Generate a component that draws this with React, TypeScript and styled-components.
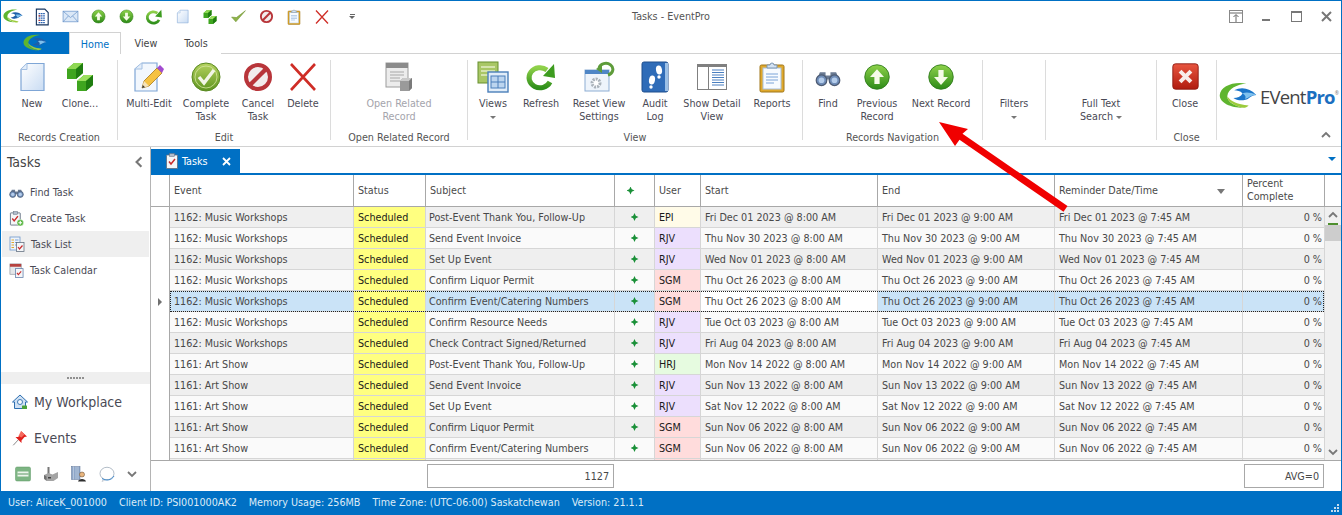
import { useId } from 'react'
import styled, { createGlobalStyle } from 'styled-components'

const BLUE = '#0070c4'
const FONT = '"DejaVu Sans Condensed", "DejaVu Sans", "Liberation Sans", sans-serif'
const TEXT_SIZE = '10.7px'

const GlobalStyle = createGlobalStyle`
  html, body { margin: 0; padding: 0; background: #fff; }
  * { box-sizing: border-box; }
  body { font-family: ${FONT}; font-stretch: condensed; font-size: ${TEXT_SIZE}; color: #444; }
`

interface IconProps {
  readonly size?: number
}

const Svg = ({ size = 32, children }: IconProps & { children: React.ReactNode }) => (
  <svg width={size} height={size} viewBox="0 0 32 32" style={{ display: 'block', flex: 'none' }}>{children}</svg>
)

const PageIcon = ({ size }: IconProps) => {
  const id = useId()
  return (
    <Svg size={size}>
      <defs><linearGradient id={id} x1="0" y1="0" x2="1" y2="1"><stop offset="0" stopColor="#ffffff" /><stop offset="1" stopColor="#c9dcf3" /></linearGradient></defs>
      <path d="M11 2.500h17v27H5V8.500z" fill={`url(#${id})`} stroke="#7fa6d6" strokeWidth="1.2" />
      <path d="M11 2.500v6H5" fill="#e3edf9" stroke="#a4c0e2" strokeWidth="1" />
    </Svg>
  )
}

const CubesIcon = ({ size }: IconProps) => (
  <Svg size={size}>
    <path d="M3 8l7-6h9v10l-7 6H3z" fill="#3fa51f" />
    <path d="M3 8l7-6h9l-7 6z" fill="#8fd853" />
    <path d="M12 8l7-6v10l-7 6z" fill="#1f7d10" />
    <path d="M13 20l7-6h9v10l-7 6h-9z" fill="#3fa51f" />
    <path d="M13 20l7-6h9l-7 6z" fill="#9be05e" />
    <path d="M22 20l7-6v10l-7 6z" fill="#1f7d10" />
  </Svg>
)

const PencilPageIcon = ({ size }: IconProps) => (
  <Svg size={size}>
    <path d="M9 2h15v28H2V8z" fill="#f2f7fd" stroke="#7fa6d6" strokeWidth="1.2" />
    <path d="M9 2v6H2" fill="#e3edf9" stroke="#a4c0e2" />
    <path d="M9 27l2-7L24 7l5 5-13 13z" fill="#f5c242" stroke="#a87a1c" strokeWidth=".8" />
    <path d="M24 7l3-3 4 4-2 4z" fill="#a24bd0" />
    <path d="M9 27l2-7 5 5z" fill="#f6e3b8" />
    <path d="M9 27l.8-3 2.2 2.2z" fill="#333" />
  </Svg>
)

const CheckCircleIcon = ({ size }: IconProps) => {
  const id = useId()
  return (
    <Svg size={size}>
      <defs><linearGradient id={id} x1="0" y1="0" x2="0" y2="1"><stop offset="0" stopColor="#b5d25f" /><stop offset="1" stopColor="#5e9420" /></linearGradient></defs>
      <circle cx="16" cy="16" r="14" fill={`url(#${id})`} stroke="#5a8a22" />
      <circle cx="16" cy="16" r="11" fill="none" stroke="#d5e6a0" strokeWidth=".8" />
      <path d="M9 16l5 6L24 9" fill="none" stroke="#f2f5e8" strokeWidth="3.4" />
    </Svg>
  )
}

const CancelIcon = ({ size }: IconProps) => (
  <Svg size={size}>
    <circle cx="16" cy="16" r="12" fill="#f2ecec" stroke="#b8353a" strokeWidth="4" />
    <path d="M7 25L25 7" stroke="#b8353a" strokeWidth="4.4" />
  </Svg>
)

const CrossIcon = ({ size }: IconProps) => (
  <Svg size={size}>
    <path d="M4 3l24 26M28 3L4 29" stroke="#cf2d26" strokeWidth="2.6" fill="none" />
  </Svg>
)

const RelatedIcon = ({ size }: IconProps) => (
  <Svg size={size}>
    <rect x="3" y="2" width="22" height="24" fill="#ececec" stroke="#9c9c9c" />
    <rect x="3" y="2" width="22" height="5" fill="#8b8b8b" />
    <path d="M7 11h14M7 14h14M7 17h10M7 20h10" stroke="#a8a8a8" />
    <path d="M17 20l3-3h9v10l-3 3h-9z" fill="#9a9a9a" />
    <path d="M17 20l3-3h9l-3 3z" fill="#c9c9c9" />
    <path d="M26 20l3-3v10l-3 3z" fill="#7a7a7a" />
  </Svg>
)

const ViewsIcon = ({ size }: IconProps) => (
  <Svg size={size}>
    <rect x="1" y="1" width="20" height="21" fill="#a9c766" stroke="#678f2e" />
    <path d="M4 6h14M4 10h14M4 14h8" stroke="#e3eec6" strokeWidth="1.6" />
    <rect x="11" y="11" width="20" height="20" fill="#e1edf9" stroke="#4a7fba" strokeWidth="1.4" />
    <rect x="14" y="15" width="14" height="12" fill="#bcd5ef" stroke="#4a7fba" />
    <path d="M21 15v12M14 21h14" stroke="#4a7fba" />
  </Svg>
)

const RefreshIcon = ({ size }: IconProps) => {
  const id = useId()
  return (
    <Svg size={size}>
      <defs><linearGradient id={id} x1="0" y1="0" x2="0" y2="1"><stop offset="0" stopColor="#8fd14a" /><stop offset="1" stopColor="#2f8f1a" /></linearGradient></defs>
      <path d="M25 21a11 10 0 1 1-3-12" fill="none" stroke={`url(#${id})`} strokeWidth="5" />
      <path d="M18 15L29 3l1 14z" fill="#3d9c1f" />
    </Svg>
  )
}

const ResetIcon = ({ size }: IconProps) => (
  <Svg size={size}>
    <rect x="2" y="9" width="24" height="21" fill="#eef4fb" stroke="#8eaed3" />
    <rect x="2" y="9" width="24" height="4" fill="#4f86c6" />
    <circle cx="13" cy="22" r="4" fill="#fff" stroke="#aab2ba" strokeWidth="3" strokeDasharray="2 1" />
    <path d="M16 7a7 6 0 1 1 9 7" fill="none" stroke="#5e9c3a" strokeWidth="3" />
    <path d="M13 8l6-4v8z" fill="#5e9c3a" />
  </Svg>
)

const AuditIcon = ({ size }: IconProps) => (
  <Svg size={size}>
    <rect x="3" y="1" width="26" height="30" rx="2" fill="#2f6cb8" stroke="#1f4f8e" />
    <rect x="26" y="2" width="3" height="28" fill="#9cc0e6" />
    <ellipse cx="13" cy="19" rx="3" ry="4.5" fill="#fff" transform="rotate(10 13 19)" />
    <circle cx="12" cy="26" r="1.7" fill="#fff" />
    <ellipse cx="20" cy="9" rx="3" ry="4.5" fill="#fff" transform="rotate(-10 20 9)" />
    <circle cx="20" cy="16" r="1.7" fill="#fff" />
  </Svg>
)

const DetailIcon = ({ size }: IconProps) => (
  <Svg size={size}>
    <rect x="1.5" y="3.5" width="29" height="25" fill="#fff" stroke="#808080" />
    <rect x="1" y="3" width="30" height="3" fill="#808080" />
    <path d="M12.5 6v22" stroke="#808080" />
    <path d="M16 9h12M16 11.5h12M16 14h12M16 16.500h12M16 19h12M16 21.500h12M16 24h12" stroke="#4a7fc0" />
  </Svg>
)

const ClipboardIcon = ({ size }: IconProps) => (
  <Svg size={size}>
    <rect x="4" y="4" width="24" height="27" rx="1.500" fill="#e0a92c" stroke="#a0761a" />
    <rect x="7" y="7" width="18" height="21" fill="#f7fbff" stroke="#a9c1dc" />
    <path d="M10 13h12M10 16h12M10 19h12M10 22h8" stroke="#7ba4d8" />
    <path d="M11 7V4h3a2 2 0 0 1 4 0h3v3z" fill="#d4e3f4" stroke="#7b95b3" />
  </Svg>
)

const BinocularsIcon = ({ size }: IconProps) => (
  <Svg size={size}>
    <path d="M6 10h7v4h6v-4h7l5 12H18v-3h-4v3H1z" fill="#6a7a92" />
    <circle cx="8" cy="20" r="6.500" fill="#6f8db8" stroke="#4e5c74" strokeWidth="1.500" />
    <circle cx="24" cy="20" r="6.500" fill="#6f8db8" stroke="#4e5c74" strokeWidth="1.500" />
    <circle cx="8" cy="20" r="3.500" fill="#b5cdeb" />
    <circle cx="24" cy="20" r="3.500" fill="#b5cdeb" />
  </Svg>
)

const ArrowCircleIcon = ({ size, down }: IconProps & { down?: boolean }) => {
  const id = useId()
  return (
    <Svg size={size}>
      <defs><linearGradient id={id} x1="0" y1="0" x2="0" y2="1"><stop offset="0" stopColor="#8ed24a" /><stop offset="1" stopColor="#2c8a17" /></linearGradient></defs>
      <circle cx="16" cy="16" r="14" fill={`url(#${id})`} stroke="#2f7a1c" />
      <path d={down ? 'M16 25l-8-9h5V8h6v8h5z' : 'M16 7l8 9h-5v8h-6v-8H8z'} fill="#f5fbe8" />
    </Svg>
  )
}

const CloseBoxIcon = ({ size }: IconProps) => {
  const id = useId()
  return (
    <Svg size={size}>
      <defs><linearGradient id={id} x1="0" y1="0" x2="0" y2="1"><stop offset="0" stopColor="#e8553f" /><stop offset="1" stopColor="#b01c10" /></linearGradient></defs>
      <rect x="2" y="2" width="28" height="28" rx="3" fill={`url(#${id})`} stroke="#8c1b12" />
      <path d="M10 10l12 12M22 10L10 22" stroke="#f8ecea" strokeWidth="4.400" />
    </Svg>
  )
}

const DocLinesIcon = ({ size }: IconProps) => (
  <Svg size={size}>
    <path d="M6 2h15l6 6v22H6z" fill="#fff" stroke="#17355f" strokeWidth="2" />
    <path d="M10 10h12M10 14h12M10 18h12M10 22h12M10 26h12" stroke="#2b62b0" strokeWidth="1.800" strokeDasharray="3 1" />
    <path d="M10 14h3M10 22h3" stroke="#c2352d" strokeWidth="1.800" />
  </Svg>
)

const MailIcon = ({ size }: IconProps) => (
  <Svg size={size}>
    <rect x="2" y="6" width="28" height="20" fill="#dbe8f7" stroke="#6d97cb" strokeWidth="1.400" />
    <path d="M2 6l14 12L30 6M2 26l10-11M30 26L20 15" fill="none" stroke="#6d97cb" strokeWidth="1.400" />
  </Svg>
)

const CheckMarkIcon = ({ size }: IconProps) => (
  <Svg size={size}>
    <path d="M3 17l8 9L29 5 12 18z" fill="#8eb34a" stroke="#6b8f2c" />
  </Svg>
)

const SwooshLogo = ({ width, dark }: { width: number; dark?: boolean }) => (
  <svg width={width} height={width * 0.72} viewBox="0 0 50 36" style={{ display: 'block', flex: 'none' }}>
    <path d="M36 2C18-1 2 6 1 17c-.8 10 14 17 31 17-12-3-22-8-21-16C12 9 24 3 36 2z" fill="#5fb52e" />
    <path d="M32 34c-12-3-21-8-21-15 5 7 13 10 28 12-2 2-4 3-7 3z" fill="#9ccb3b" />
    <path d="M20 11c9-5 21-3 29 6-8 0-8 6-17 7-6 .5-10-1-13-3 5 0 10-2 12-6-3-3-7-4-11-4z" fill={dark ? '#1e5fa8' : '#1b75c9'} />
    <path d="M31 15c5-2 11-1 18 2-8 0-9 4-15 5 2-2 1-5-3-7z" fill="#7fc1ee" />
  </svg>
)

const TaskClipIcon = ({ size }: IconProps) => (
  <Svg size={size}>
    <rect x="5" y="4" width="22" height="27" rx="1" fill="#f4f6f8" stroke="#5d6b7c" strokeWidth="1.600" />
    <rect x="11" y="1" width="10" height="6" fill="#b0bccb" stroke="#5d6b7c" />
    <path d="M10 17l4 5 8-10" fill="none" stroke="#c92a2a" strokeWidth="3" />
  </Svg>
)

const TaskCreateIcon = ({ size }: IconProps) => (
  <Svg size={size}>
    <rect x="3" y="4" width="21" height="26" rx="1" fill="#f4f6f8" stroke="#5d6b7c" strokeWidth="1.800" />
    <rect x="9" y="1" width="9" height="6" fill="#b0bccb" stroke="#5d6b7c" />
    <path d="M7 16l4 5 8-10" fill="none" stroke="#c92a2a" strokeWidth="3" />
    <circle cx="24" cy="25" r="7" fill="#52b33a" stroke="#fff" />
    <path d="M24 21v8M20 25h8" stroke="#fff" strokeWidth="2.400" />
  </Svg>
)

const TaskListIcon = ({ size }: IconProps) => (
  <Svg size={size}>
    <rect x="2" y="2" width="20" height="26" fill="#eef4fb" stroke="#6d97cb" strokeWidth="1.600" />
    <path d="M5 8h5M5 13h5M5 18h5M5 23h5" stroke="#e0a92c" strokeWidth="2" />
    <path d="M12 8h7M12 13h7M12 18h7" stroke="#7ba4d8" strokeWidth="2" />
    <rect x="15" y="13" width="15" height="18" fill="#f4f6f8" stroke="#5d6b7c" strokeWidth="1.500" />
    <path d="M18 22l3 4 6-7" fill="none" stroke="#c92a2a" strokeWidth="2.400" />
  </Svg>
)

const TaskCalendarIcon = ({ size }: IconProps) => (
  <Svg size={size}>
    <rect x="2" y="2" width="24" height="22" fill="#e4e7ea" stroke="#8a929c" strokeWidth="1.400" />
    <rect x="2" y="2" width="24" height="6" fill="#b6423f" />
    <rect x="14" y="12" width="16" height="19" fill="#f4f6f8" stroke="#5d7ba8" strokeWidth="1.600" />
    <path d="M17 21l3 4 6-7" fill="none" stroke="#c92a2a" strokeWidth="2.400" />
  </Svg>
)

const HomeIcon = ({ size }: IconProps) => (
  <Svg size={size}>
    <path d="M16 2L1 16h4v13h22V16h4z" fill="#cfe0f3" stroke="#2e6fb0" strokeWidth="2" />
    <circle cx="16" cy="16" r="5" fill="#f6f9fd" stroke="#2e6fb0" strokeWidth="1.800" />
    <rect x="20" y="23" width="10" height="7" rx="1" fill="#4ba33a" />
  </Svg>
)

const PinIcon = ({ size }: IconProps) => (
  <Svg size={size}>
    <path d="M2 31l10-11" stroke="#b9b9b9" strokeWidth="2" />
    <path d="M3 30l11-12" stroke="#777" strokeWidth="1" />
    <path d="M18 2l12 11-5 1-6 7 0 5-12-12 5 0 7-6z" fill="#e0201c" />
    <path d="M18 2l7 7-6 6-6-3z" fill="#f56a5e" />
  </Svg>
)

const RoomIcon = ({ size }: IconProps) => (
  <Svg size={size}>
    <rect x="1" y="2" width="30" height="28" rx="3" fill="#7db583" stroke="#5b9663" />
    <rect x="5" y="11" width="22" height="10" fill="#eef5ec" />
    <path d="M5 16h22" stroke="#5b9663" strokeWidth="2" />
  </Svg>
)

const FactoryIcon = ({ size }: IconProps) => (
  <Svg size={size}>
    <rect x="9" y="2" width="4" height="14" fill="#777" />
    <path d="M2 18l9-4 8 3 11-5v12l-9 6H7l-5-4z" fill="#a4a4a4" />
    <path d="M2 18l5 3 0 8-5-4z" fill="#6f6f6f" />
    <rect x="10" y="22" width="6" height="3" fill="#444" />
  </Svg>
)

const PersonIcon = ({ size }: IconProps) => (
  <Svg size={size}>
    <rect x="1" y="1" width="17" height="26" fill="#8ea6c8" stroke="#5a7194" />
    <path d="M5 1v26M10 1v26M14 1v26" stroke="#dbe4f0" />
    <circle cx="22" cy="17" r="5" fill="#e8b57e" stroke="#5a3f25" />
    <path d="M14 31c1-7 15-7 16 0z" fill="#2e2e2e" />
  </Svg>
)

const BubbleIcon = ({ size }: IconProps) => (
  <Svg size={size}>
    <ellipse cx="16" cy="15" rx="14" ry="12.500" fill="#fff" stroke="#9aa7b5" strokeWidth="1.500" />
    <path d="M9 26l-3 5 8-4" fill="#fff" stroke="#9aa7b5" />
    <path d="M6 25c8 5 19 4 24-5" fill="none" stroke="#2e7fc9" strokeWidth="1.800" />
  </Svg>
)

const Chevron = ({ dir, size = 10, color = '#777' }: { dir: 'up' | 'down' | 'left'; size?: number; color?: string }) => {
  const d = { up: 'M1 7l4-4 4 4', down: 'M1 3l4 4 4-4', left: 'M7 1L3 5l4 4' }[dir]
  return (
    <svg width={size} height={size} viewBox="0 0 10 10" style={{ display: 'block', flex: 'none' }}>
      <path d={d} fill="none" stroke={color} strokeWidth="1.800" />
    </svg>
  )
}

const Window = styled.div`
  position: relative;
  width: 1342px;
  height: 515px;
  overflow: hidden;
  display: flex;
  flex-direction: column;
  border: 1px solid ${BLUE};
  border-bottom: 0;
`

const TitleBar = styled.div`
  height: 31px;
  flex: none;
  position: relative;
  display: flex;
  align-items: center;
`

const Qat = styled.div`
  display: flex;
  align-items: center;
`

const QatSlot = styled.div<{ $w?: number; $pr?: number }>`
  width: ${p => p.$w ?? 28}px;
  padding-right: ${p => p.$pr ?? 0}px;
  display: flex;
  justify-content: center;
`

const QatMore = styled.div`
  margin-left: 1px;
  width: 30px;
  display: flex;
  flex-direction: column;
  align-items: center;
  gap: 1px;
  &::before { content: ''; width: 5px; height: 1px; background: #666; }
  &::after { content: ''; border: 3px solid transparent; border-top: 3px solid #666; border-bottom: 0; }
`

const WindowTitle = styled.div`
  position: absolute;
  left: 0;
  right: 0;
  top: 9px;
  text-align: center;
  color: #555;
`

const WindowButtons = styled.div`
  margin-left: auto;
  display: flex;
  align-items: center;
`

const WindowButton = styled.div`
  width: 30px;
  height: 20px;
  display: flex;
  align-items: center;
  justify-content: center;
`

const TabRow = styled.div`
  height: 22px;
  flex: none;
  display: flex;
  border-bottom: 1px solid #d2d2d2;
`

const AppButton = styled.div`
  width: 68px;
  height: 22px;
  background: ${BLUE};
  display: flex;
  align-items: center;
  justify-content: center;
`

const RibbonTab = styled.div<{ $active?: boolean }>`
  height: 22px;
  padding-top: 5px;
  width: ${p => (p.$active ? 52 : 50)}px;
  text-align: center;
  color: ${p => (p.$active ? BLUE : '#444')};
  background: #fff;
  ${p => p.$active && 'border: 1px solid #d2d2d2; border-bottom: 0;'}
`

const Ribbon = styled.div`
  height: 93px;
  flex: none;
  display: flex;
  padding: 6px 0;
  border-bottom: 1px solid #d2d2d2;
`

const RibbonGroup = styled.div<{ $w: number }>`
  width: ${p => p.$w}px;
  flex: none;
  display: flex;
  flex-direction: column;
  border-right: 1px solid #dcdcdc;
`

const GroupButtons = styled.div<{ $pad?: number }>`
  flex: 1;
  display: flex;
  padding-left: ${p => p.$pad ?? 0}px;
`

const GroupLabel = styled.div`
  height: 14px;
  line-height: 14px;
  margin-bottom: -5px;
  text-align: center;
  color: #555;
  white-space: nowrap;
`

const RibbonButton = styled.div<{ $w: number; $off?: boolean }>`
  width: ${p => p.$w}px;
  flex: none;
  display: flex;
  flex-direction: column;
  align-items: center;
  text-align: center;
  color: ${p => (p.$off ? '#a4a4ac' : '#4a4a55')};
  line-height: 13px;
`

const IconHolder = styled.div`
  height: 33px;
  flex: none;
  margin-bottom: 4px;
  display: flex;
  align-items: center;
  justify-content: center;
`

const ButtonLabel = styled.span`
  display: block;
`

const Caret = styled.span`
  display: inline-block;
  width: 0;
  height: 0;
  border: 3px solid transparent;
  border-top: 3px solid #777;
  border-bottom: 0;
  vertical-align: middle;
`

const SearchCaret = styled(Caret)`
  margin-left: 3px;
`

const TextOnlyButton = styled(RibbonButton)`
  padding-top: 37px;
`

const LogoBox = styled.div`
  flex: 1;
  position: relative;
  display: flex;
  align-items: center;
  gap: 3px;
  padding: 0 0 8px 2px;
`

const LogoText = styled.div`
  font-family: "Open Sans", "Liberation Sans", sans-serif;
  font-stretch: normal;
  font-size: 18.500px;
  letter-spacing: -.8px;
  color: #444;
  white-space: nowrap;
  b { color: #1b6fc0; font-weight: 700; }
  sup { font-size: 5px; letter-spacing: 0; vertical-align: 9px; color: #777; line-height: 0; }
`

const RibbonCollapse = styled.div`
  position: absolute;
  right: 10px;
  bottom: 0;
`

const Body = styled.div`
  flex: 1;
  min-height: 0;
  display: flex;
`

const Sidebar = styled.aside`
  width: 150px;
  flex: none;
  display: flex;
  flex-direction: column;
  border-right: 1px solid #b4b4b4;
`

const SideHead = styled.div`
  height: 32px;
  flex: none;
  display: flex;
  align-items: center;
  justify-content: space-between;
  padding: 0 5px 2px 6px;
  font-size: 14px;
  color: #444;
`

const SideItem = styled.div<{ $active?: boolean }>`
  height: 26px;
  flex: none;
  margin: 0 1px;
  padding-left: 7px;
  display: flex;
  align-items: center;
  gap: 6px;
  color: #4a4a55;
  background: ${p => (p.$active ? '#efefef' : 'transparent')};
`

const SideSpacer = styled.div`
  flex: 1;
`

const Splitter = styled.div`
  height: 12px;
  flex: none;
  background: #efefef;
  display: flex;
  align-items: center;
  justify-content: center;
  gap: 1px;
  i { width: 2px; height: 2px; background: #909090; }
`

const BigItem = styled.div`
  height: 36px;
  flex: none;
  padding-left: 11px;
  display: flex;
  align-items: center;
  gap: 6px;
  font-size: 14px;
  color: #4a4a55;
`

const SideFooter = styled.div`
  height: 35px;
  flex: none;
  padding-left: 14px;
  display: flex;
  align-items: center;
  gap: 12px;
`

const Main = styled.main`
  flex: 1;
  min-width: 0;
  display: flex;
  flex-direction: column;
`

const DocStrip = styled.div`
  height: 28px;
  flex: none;
  padding-top: 2px;
  display: flex;
  justify-content: space-between;
  border-bottom: 2px solid ${BLUE};
`

const DocTab = styled.div`
  width: 89px;
  height: 24px;
  background: ${BLUE};
  color: #fff;
  display: flex;
  align-items: center;
  padding-left: 13px;
  gap: 2px;
`

const DocTabClose = styled.svg`
  margin-left: 12px;
`

const DocMenu = styled.div`
  margin: 8px 5px 0 0;
  width: 0;
  height: 0;
  border: 4px solid transparent;
  border-top: 4px solid ${BLUE};
  border-bottom: 0;
`

const COLUMNS = '19px 184px 72px 189px 40px 46px 177px 177px 188px 82px'

const HeaderRow = styled.div`
  height: 32px;
  flex: none;
  display: grid;
  grid-template-columns: ${COLUMNS} 16px;
  border-bottom: 1px solid #a8a8a8;
`

const HeaderCell = styled.div<{ $center?: boolean }>`
  display: flex;
  align-items: center;
  justify-content: ${p => (p.$center ? 'center' : 'flex-start')};
  position: relative;
  padding: 0 3px 1px 4px;
  border-right: 1px solid #a8a8a8;
  color: #4a4a4a;
  line-height: 13px;
`

const SortMark = styled.span`
  position: absolute;
  right: 17px;
  top: 14px;
  width: 0;
  height: 0;
  border: 4.500px solid transparent;
  border-top: 5px solid #777;
  border-bottom: 0;
`

const GridBody = styled.div`
  flex: 1;
  min-height: 0;
  display: flex;
`

const Rows = styled.div`
  width: 1174px;
  flex: none;
  overflow: hidden;
`

const Row = styled.div<{ $selected?: boolean }>`
  position: relative;
  height: 21px;
  display: grid;
  grid-template-columns: ${COLUMNS};
  ${p => p.$selected && `
    &::after {
      content: '';
      position: absolute;
      inset: 0 1px 0 19px;
      border: 1px dotted #222;
    }
  `}
`

const Indicator = styled.div`
  display: flex;
  align-items: center;
  justify-content: center;
  border-right: 1px solid #a8a8a8;
`

const IndicatorMark = styled.span`
  width: 0;
  height: 0;
  border: 4px solid transparent;
  border-left: 4px solid #707070;
  border-right: 0;
`

const Cell = styled.div<{ $bg: string; $dark?: boolean }>`
  background: ${p => p.$bg};
  border-right: 1px solid #d6d6d6;
  border-bottom: 1px solid #d6d6d6;
  color: ${p => (p.$dark ? '#1a1a1a' : '#484848')};
  padding: 0 4px;
  display: flex;
  align-items: center;
  white-space: nowrap;
  overflow: hidden;
`

const SubjectCell = styled(Cell)`
  padding-left: 3px;
`

const MarkCell = styled(Cell)`
  justify-content: center;
`

const PercentCell = styled(Cell)`
  justify-content: flex-end;
  padding-right: 2px;
`

const Sparkle = styled.span`
  width: 8px;
  height: 8px;
  background: #1a9038;
  clip-path: polygon(50% 0, 66% 34%, 100% 50%, 66% 66%, 50% 100%, 34% 66%, 0 50%, 34% 34%);
`

const HeaderSparkle = styled(Sparkle)`
  margin: 1px 9px 0 0;
`

const Scrollbar = styled.div`
  width: 16px;
  flex: none;
  background: #f0f0f0;
  display: flex;
  flex-direction: column;
  align-items: center;
  padding: 3px 0 3px;
`

const ScrollMarker = styled.div`
  width: 10px;
  height: 2px;
  margin-top: 3px;
  background: #4e8f2e;
`

const ScrollThumb = styled.div`
  width: 16px;
  height: 16px;
  background: #cdcdcd;
`

const ScrollGap = styled.div`
  flex: 1;
`

const Footer = styled.div`
  height: 31px;
  flex: none;
  border-top: 1px solid #a8a8a8;
  display: grid;
  grid-template-columns: 276px 187px 630px 80px;
  padding-top: 3px;
`

const TotalBox = styled.div`
  height: 24px;
  border: 1px solid #a8a8a8;
  display: flex;
  align-items: center;
  justify-content: flex-end;
  padding-right: 4px;
  color: #484848;
`

const StatusBar = styled.footer`
  position: relative;
  height: 24px;
  flex: none;
  margin: 0 -1px;
  background: ${BLUE};
  color: #dcebf7;
  display: flex;
  align-items: center;
  gap: 12px;
  padding: 0 8px 1px;
`

const Grip = styled.svg`
  position: absolute;
  right: 2px;
  bottom: 2px;
`

const ArrowOverlay = styled.svg`
  position: absolute;
  left: -1px;
  top: -1px;
  pointer-events: none;
`

interface Task {
  readonly event: string
  readonly subject: string
  readonly user: string
  readonly start: string
  readonly end: string
  readonly reminder: string
}

const task = (event: string, subject: string, user: string, date: string): Task => ({
  event,
  subject,
  user,
  start: `${date} @ 8:00 AM`,
  end: `${date} @ 9:00 AM`,
  reminder: `${date} @ 7:45 AM`,
})

const MUSIC = '1162: Music Workshops'
const ART = '1161: Art Show'

const TASKS: readonly Task[] = [
  task(MUSIC, 'Post-Event Thank You, Follow-Up', 'EPI', 'Fri Dec 01 2023'),
  task(MUSIC, 'Send Event Invoice', 'RJV', 'Thu Nov 30 2023'),
  task(MUSIC, 'Set Up Event', 'RJV', 'Wed Nov 01 2023'),
  task(MUSIC, 'Confirm Liquor Permit', 'SGM', 'Thu Oct 26 2023'),
  task(MUSIC, 'Confirm Event/Catering Numbers', 'SGM', 'Thu Oct 26 2023'),
  task(MUSIC, 'Confirm Resource Needs', 'RJV', 'Tue Oct 03 2023'),
  task(MUSIC, 'Check Contract Signed/Returned', 'RJV', 'Fri Aug 04 2023'),
  task(ART, 'Post-Event Thank You, Follow-Up', 'HRJ', 'Mon Nov 14 2022'),
  task(ART, 'Send Event Invoice', 'RJV', 'Sun Nov 13 2022'),
  task(ART, 'Set Up Event', 'RJV', 'Sat Nov 12 2022'),
  task(ART, 'Confirm Liquor Permit', 'SGM', 'Sun Nov 06 2022'),
  task(ART, 'Confirm Event/Catering Numbers', 'SGM', 'Sun Nov 06 2022'),
]

const USER_COLORS: Record<string, string> = {
  EPI: '#fffbe8',
  RJV: '#ecdffd',
  SGM: '#ffdcdc',
  HRJ: '#e6fbe0',
}

const SELECTED_INDEX = 4

const TaskRow = ({ row, index }: { row: Task; index: number }) => {
  const selected = index === SELECTED_INDEX
  const bg = selected ? '#cae3f7' : index % 2 === 0 ? '#efefef' : '#fafafa'
  return (
    <Row $selected={selected}>
      <Indicator>{selected && <IndicatorMark />}</Indicator>
      <Cell $bg={bg}>{row.event}</Cell>
      <Cell $bg="#ffff80" $dark>Scheduled</Cell>
      <SubjectCell $bg={bg}>{row.subject}</SubjectCell>
      <MarkCell $bg={bg}><Sparkle /></MarkCell>
      <Cell $bg={USER_COLORS[row.user]} $dark>{row.user}</Cell>
      <Cell $bg={selected ? '#fff' : bg}>{row.start}</Cell>
      <Cell $bg={bg}>{row.end}</Cell>
      <Cell $bg={bg}>{row.reminder}</Cell>
      <PercentCell $bg={bg}>0 %</PercentCell>
    </Row>
  )
}

const ClippedRow = () => (
  <Row>
    <Indicator />
    <Cell $bg="#efefef" />
    <Cell $bg="#ffff80" />
    <Cell $bg="#efefef" />
    <Cell $bg="#efefef" />
    <Cell $bg={USER_COLORS.SGM} />
    <Cell $bg="#efefef" />
    <Cell $bg="#efefef" />
    <Cell $bg="#efefef" />
    <Cell $bg="#efefef" />
  </Row>
)

const Button = ({ w, icon, off, children }: { w: number; icon: React.ReactNode; off?: boolean; children: React.ReactNode }) => (
  <RibbonButton $w={w} $off={off}>
    <IconHolder>{icon}</IconHolder>
    <ButtonLabel>{children}</ButtonLabel>
  </RibbonButton>
)

export default function App() {
  return (
    <>
      <GlobalStyle />
      <Window>
        <TitleBar>
          <Qat>
            <QatSlot $w={27} $pr={3}><SwooshLogo width={20} dark /></QatSlot>
            <QatSlot><DocLinesIcon size={18} /></QatSlot>
            <QatSlot><MailIcon size={17} /></QatSlot>
            <QatSlot><ArrowCircleIcon size={15} /></QatSlot>
            <QatSlot><ArrowCircleIcon size={15} down /></QatSlot>
            <QatSlot><RefreshIcon size={18} /></QatSlot>
            <QatSlot><PageIcon size={15} /></QatSlot>
            <QatSlot><CubesIcon size={16} /></QatSlot>
            <QatSlot><CheckMarkIcon size={17} /></QatSlot>
            <QatSlot><CancelIcon size={15} /></QatSlot>
            <QatSlot><ClipboardIcon size={16} /></QatSlot>
            <QatSlot><CrossIcon size={16} /></QatSlot>
            <QatMore />
          </Qat>
          <WindowTitle>Tasks - EventPro</WindowTitle>
          <WindowButtons>
            <WindowButton>
              <svg width="14" height="13" viewBox="0 0 14 13"><rect x=".5" y=".5" width="13" height="12" fill="none" stroke="#888" /><path d="M1 3h12M7 12V5M4.500 7L7 4.500 9.500 7" fill="none" stroke="#666" /></svg>
            </WindowButton>
            <WindowButton>
              <svg width="10" height="10" viewBox="0 0 10 10"><rect x="1" y="7" width="8" height="2" fill="#777" /></svg>
            </WindowButton>
            <WindowButton>
              <svg width="11" height="11" viewBox="0 0 11 11"><rect x=".5" y=".5" width="10" height="10" fill="none" stroke="#777" /><rect x="0" y="0" width="11" height="2" fill="#777" /></svg>
            </WindowButton>
            <WindowButton>
              <svg width="11" height="11" viewBox="0 0 11 11"><path d="M1 1l9 9M10 1l-9 9" stroke="#777" strokeWidth="2" /></svg>
            </WindowButton>
          </WindowButtons>
        </TitleBar>
        <TabRow>
          <AppButton><SwooshLogo width={24} dark /></AppButton>
          <RibbonTab $active>Home</RibbonTab>
          <RibbonTab>View</RibbonTab>
          <RibbonTab>Tools</RibbonTab>
        </TabRow>
        <Ribbon>
          <RibbonGroup $w={117}>
            <GroupButtons $pad={8}>
              <Button w={46} icon={<PageIcon />}>New</Button>
              <Button w={50} icon={<CubesIcon />}>Clone...</Button>
            </GroupButtons>
            <GroupLabel>Records Creation</GroupLabel>
          </RibbonGroup>
          <RibbonGroup $w={213}>
            <GroupButtons $pad={4}>
              <Button w={54} icon={<PencilPageIcon />}>Multi-Edit</Button>
              <Button w={60} icon={<CheckCircleIcon />}>Complete<br />Task</Button>
              <Button w={44} icon={<CancelIcon />}>Cancel<br />Task</Button>
              <Button w={46} icon={<CrossIcon />}>Delete</Button>
            </GroupButtons>
            <GroupLabel>Edit</GroupLabel>
          </RibbonGroup>
          <RibbonGroup $w={137}>
            <GroupButtons>
              <Button w={136} off icon={<RelatedIcon />}>Open Related<br />Record</Button>
            </GroupButtons>
            <GroupLabel>Open Related Record</GroupLabel>
          </RibbonGroup>
          <RibbonGroup $w={335}>
            <GroupButtons $pad={2}>
              <Button w={46} icon={<ViewsIcon />}>Views<br /><Caret /></Button>
              <Button w={50} icon={<RefreshIcon />}>Refresh</Button>
              <Button w={66} icon={<ResetIcon />}>Reset View<br />Settings</Button>
              <Button w={46} icon={<AuditIcon />}>Audit<br />Log</Button>
              <Button w={68} icon={<DetailIcon />}>Show Detail<br />View</Button>
              <Button w={52} icon={<ClipboardIcon />}>Reports</Button>
            </GroupButtons>
            <GroupLabel>View</GroupLabel>
          </RibbonGroup>
          <RibbonGroup $w={180}>
            <GroupButtons $pad={3}>
              <Button w={44} icon={<BinocularsIcon size={26} />}>Find</Button>
              <Button w={54} icon={<ArrowCircleIcon size={28} />}>Previous<br />Record</Button>
              <Button w={74} icon={<ArrowCircleIcon size={28} down />}>Next Record</Button>
            </GroupButtons>
            <GroupLabel>Records Navigation</GroupLabel>
          </RibbonGroup>
          <RibbonGroup $w={63}>
            <GroupButtons>
              <TextOnlyButton $w={62}><ButtonLabel>Filters<br /><Caret /></ButtonLabel></TextOnlyButton>
            </GroupButtons>
          </RibbonGroup>
          <RibbonGroup $w={111}>
            <GroupButtons>
              <TextOnlyButton $w={110}><ButtonLabel>Full Text<br />Search<SearchCaret /></ButtonLabel></TextOnlyButton>
            </GroupButtons>
          </RibbonGroup>
          <RibbonGroup $w={60}>
            <GroupButtons>
              <Button w={56} icon={<CloseBoxIcon size={29} />}>Close</Button>
            </GroupButtons>
            <GroupLabel>Close</GroupLabel>
          </RibbonGroup>
          <LogoBox>
            <SwooshLogo width={38} />
            <LogoText>EVent<b>Pro</b><sup>®</sup></LogoText>
            <RibbonCollapse><Chevron dir="up" /></RibbonCollapse>
          </LogoBox>
        </Ribbon>
        <Body>
          <Sidebar>
            <SideHead>Tasks<Chevron dir="left" size={12} /></SideHead>
            <SideItem><BinocularsIcon size={15} />Find Task</SideItem>
            <SideItem><TaskCreateIcon size={15} />Create Task</SideItem>
            <SideItem $active><TaskListIcon size={16} />Task List</SideItem>
            <SideItem><TaskCalendarIcon size={15} />Task Calendar</SideItem>
            <SideSpacer />
            <Splitter><i /><i /><i /><i /><i /><i /></Splitter>
            <BigItem><HomeIcon size={16} />My Workplace</BigItem>
            <BigItem><PinIcon size={16} />Events</BigItem>
            <SideFooter>
              <RoomIcon size={16} />
              <FactoryIcon size={16} />
              <PersonIcon size={16} />
              <BubbleIcon size={16} />
              <Chevron dir="down" />
            </SideFooter>
          </Sidebar>
          <Main>
            <DocStrip>
              <DocTab>
                <TaskClipIcon size={16} />
                Tasks
                <DocTabClose width="9" height="9" viewBox="0 0 9 9"><path d="M1 1l7 7M8 1L1 8" stroke="#fff" strokeWidth="1.800" /></DocTabClose>
              </DocTab>
              <DocMenu />
            </DocStrip>
            <HeaderRow>
              <HeaderCell />
              <HeaderCell>Event</HeaderCell>
              <HeaderCell>Status</HeaderCell>
              <HeaderCell>Subject</HeaderCell>
              <HeaderCell $center><HeaderSparkle /></HeaderCell>
              <HeaderCell>User</HeaderCell>
              <HeaderCell>Start</HeaderCell>
              <HeaderCell>End</HeaderCell>
              <HeaderCell>Reminder Date/Time<SortMark /></HeaderCell>
              <HeaderCell>Percent<br />Complete</HeaderCell>
              <div />
            </HeaderRow>
            <GridBody>
              <Rows>
                {TASKS.map((row, i) => <TaskRow key={i} row={row} index={i} />)}
                <ClippedRow />
              </Rows>
              <Scrollbar>
                <Chevron dir="up" />
                <ScrollMarker />
                <ScrollThumb />
                <ScrollGap />
                <Chevron dir="down" />
              </Scrollbar>
            </GridBody>
            <Footer>
              <div />
              <TotalBox>1127</TotalBox>
              <div />
              <TotalBox>AVG=0</TotalBox>
            </Footer>
          </Main>
        </Body>
        <StatusBar>
          <span>User: AliceK_001000</span>
          <span>Client ID: PSI001000AK2</span>
          <span>Memory Usage: 256MB</span>
          <span>Time Zone: (UTC-06:00) Saskatchewan</span>
          <span>Version: 21.1.1</span>
          <Grip width="9" height="9" viewBox="0 0 9 9" fill="#c5dcee">
            <rect x="6" y="0" width="2" height="2" /><rect x="3" y="3" width="2" height="2" /><rect x="6" y="3" width="2" height="2" /><rect x="0" y="6" width="2" height="2" /><rect x="3" y="6" width="2" height="2" /><rect x="6" y="6" width="2" height="2" />
          </Grip>
        </StatusBar>
        <ArrowOverlay width="1342" height="515" viewBox="0 0 1342 515">
          <path d="M939 122L968 129 962.500 133.800 1067.500 206 1063.500 211.800 959.500 139.800 955 146z" fill="#f00000" />
        </ArrowOverlay>
      </Window>
    </>
  )
}
